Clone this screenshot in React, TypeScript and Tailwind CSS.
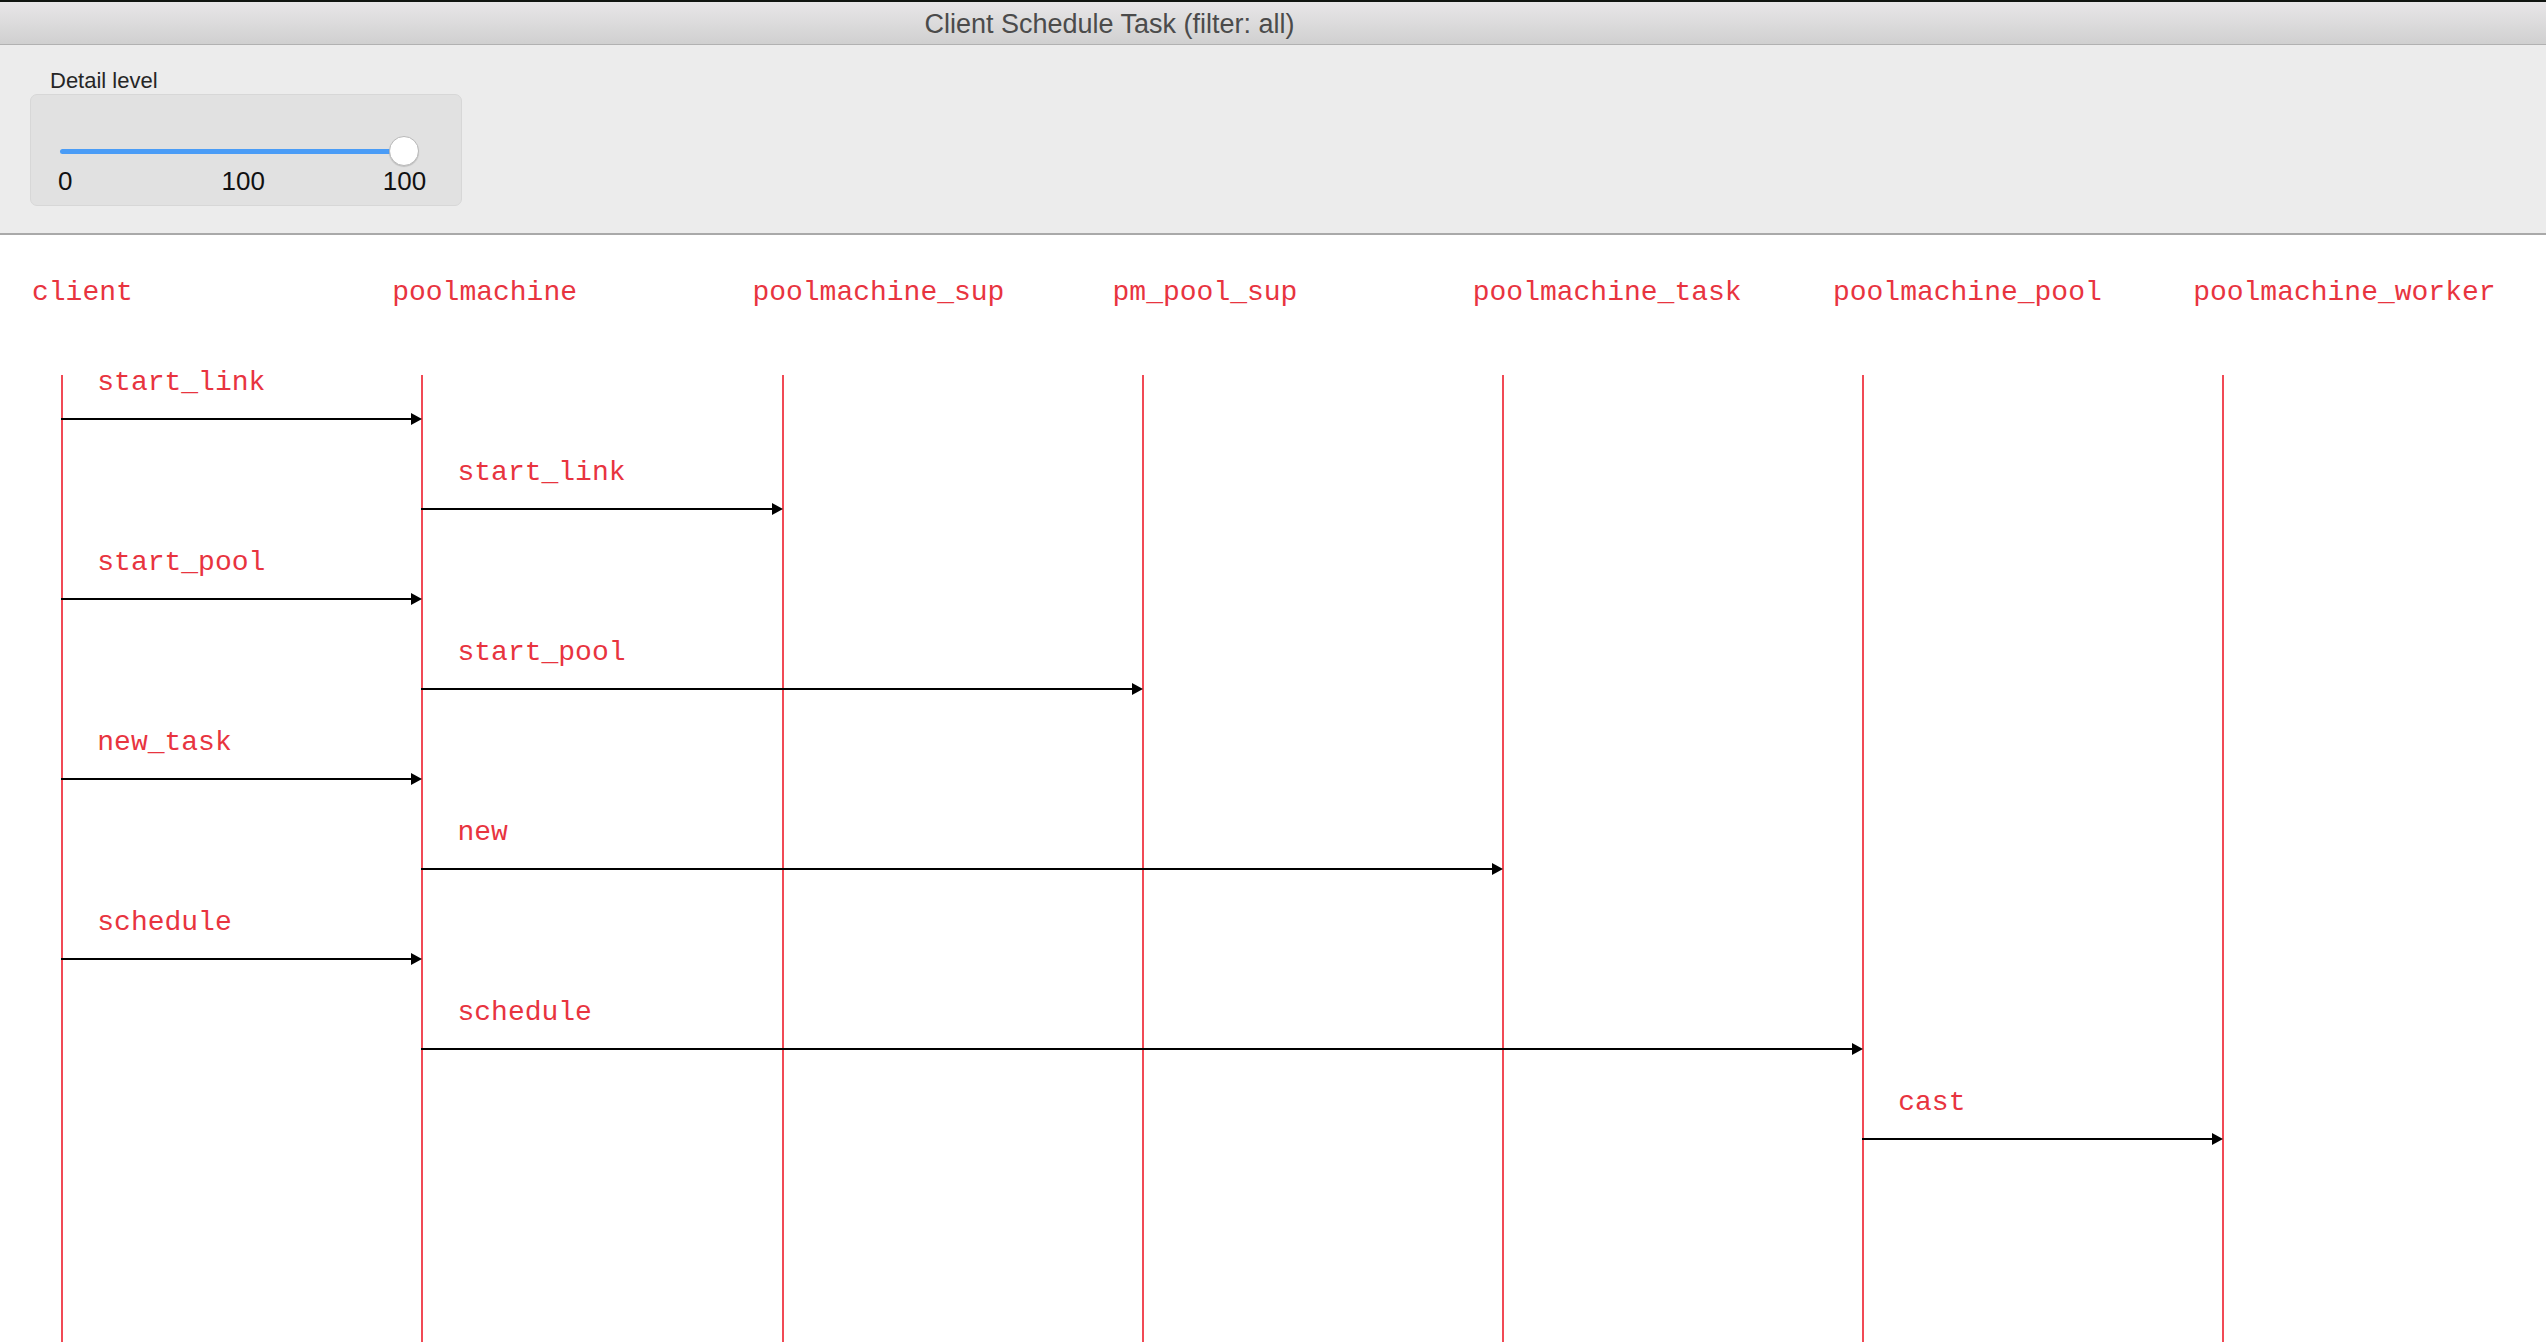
const actors = [
  "client",
  "poolmachine",
  "poolmachine_sup",
  "pm_pool_sup",
  "poolmachine_task",
  "poolmachine_pool",
  "poolmachine_worker",
];

const messages = [
  { from: 0, to: 1, label: "start_link" },
  { from: 1, to: 2, label: "start_link" },
  { from: 0, to: 1, label: "start_pool" },
  { from: 1, to: 3, label: "start_pool" },
  { from: 0, to: 1, label: "new_task" },
  { from: 1, to: 4, label: "new" },
  { from: 0, to: 1, label: "schedule" },
  { from: 1, to: 5, label: "schedule" },
  { from: 5, to: 6, label: "cast" },
];

const colStart = [
  "col-start-1",
  "col-start-2",
  "col-start-3",
  "col-start-4",
  "col-start-5",
  "col-start-6",
  "col-start-7",
];
const colSpan = [
  "col-span-1",
  "col-span-1",
  "col-span-2",
  "col-span-3",
  "col-span-4",
  "col-span-5",
  "col-span-6",
];
const rowStart = [
  "row-start-1",
  "row-start-2",
  "row-start-3",
  "row-start-4",
  "row-start-5",
  "row-start-6",
  "row-start-7",
  "row-start-8",
  "row-start-9",
];

const sans = "font-['Liberation_Sans',Arial,sans-serif]";
const mono = "font-['Liberation_Mono','Courier_New',monospace]";

function TitleBar() {
  return (
    <div className="h-[45px] shrink-0 border-t-2 border-b border-t-[#111511] border-b-[#b1b1b1] bg-linear-to-b from-[#e8e6e8] to-[#d0d0d0] flex items-center justify-center pr-[327px] pt-[2px]">
      <span className={`${sans} text-[27px] leading-none text-[#4b4b4b]`}>
        Client Schedule Task (filter: all)
      </span>
    </div>
  );
}

function DetailPanel() {
  return (
    <div className={`${sans} h-[190px] shrink-0 bg-[#ececec] border-b-2 border-[#a9a9a9] pt-[25px] pl-[30px]`}>
      <div className="ml-[20px] h-[22px] text-[22px] leading-none text-[#262626]">Detail level</div>
      <div className="mt-[2px] w-[432px] h-[112px] rounded-[7px] border border-[#d7d7d7] bg-[#e1e1e1] pt-[41px] pl-[29px]">
        {/* slider */}
        <div className="flex items-center h-[30px]">
          <div className="w-[344px] h-[5px] rounded-full bg-[#4a9cf6]" />
          <div className="w-[30px] h-[30px] -ml-[15px] rounded-full bg-white border border-[#b9b9b9] shadow-[0_1px_1px_rgba(0,0,0,0.15)]" />
        </div>
        <div className="mt-[2px] -ml-[2px] flex text-[26px] leading-none text-[#111]">
          <span>0</span>
          <span className="ml-[149px]">100</span>
          <span className="ml-[118px]">100</span>
        </div>
      </div>
    </div>
  );
}

function SequenceDiagram() {
  return (
    <div className={`${mono} flex-1 flex flex-col bg-white text-[#e8343f] text-[28px] leading-[28px]`}>
      {/* Actor names */}
      <div className="grid grid-cols-[repeat(7,360.2px)] ml-[32px] pt-[44px]">
        {actors.map((name) => (
          <div key={name} className="whitespace-nowrap">
            {name}
          </div>
        ))}
      </div>

      {/* Lifelines + messages */}
      <div className="flex-1 mt-[62px] ml-[61.3px] grid grid-cols-[repeat(7,360.2px)] grid-rows-[repeat(9,90px)_1fr]">
        {actors.map((name, i) => (
          <div key={name} className={`${colStart[i]} row-span-full mt-[5.5px] w-[2px] bg-[#f14a55]`} />
        ))}
        {messages.map((m, i) => (
          <div
            key={`${m.label}-${i}`}
            className={`${colStart[m.from]} ${colSpan[m.to - m.from]} ${rowStart[i]} self-start -mr-[1px] flex flex-col`}
          >
            <span className="pl-[36px] whitespace-nowrap">{m.label}</span>
            <div className="mt-[16px] h-[12px] flex items-center">
              <div className="flex-1 h-[2px] bg-black" />
              <div className="w-0 h-0 border-y-[6px] border-y-transparent border-l-[11px] border-l-black" />
            </div>
          </div>
        ))}
      </div>
    </div>
  );
}

export default function App() {
  return (
    <div className="h-screen w-full flex flex-col overflow-hidden">
      <TitleBar />
      <DetailPanel />
      <SequenceDiagram />
    </div>
  );
}
